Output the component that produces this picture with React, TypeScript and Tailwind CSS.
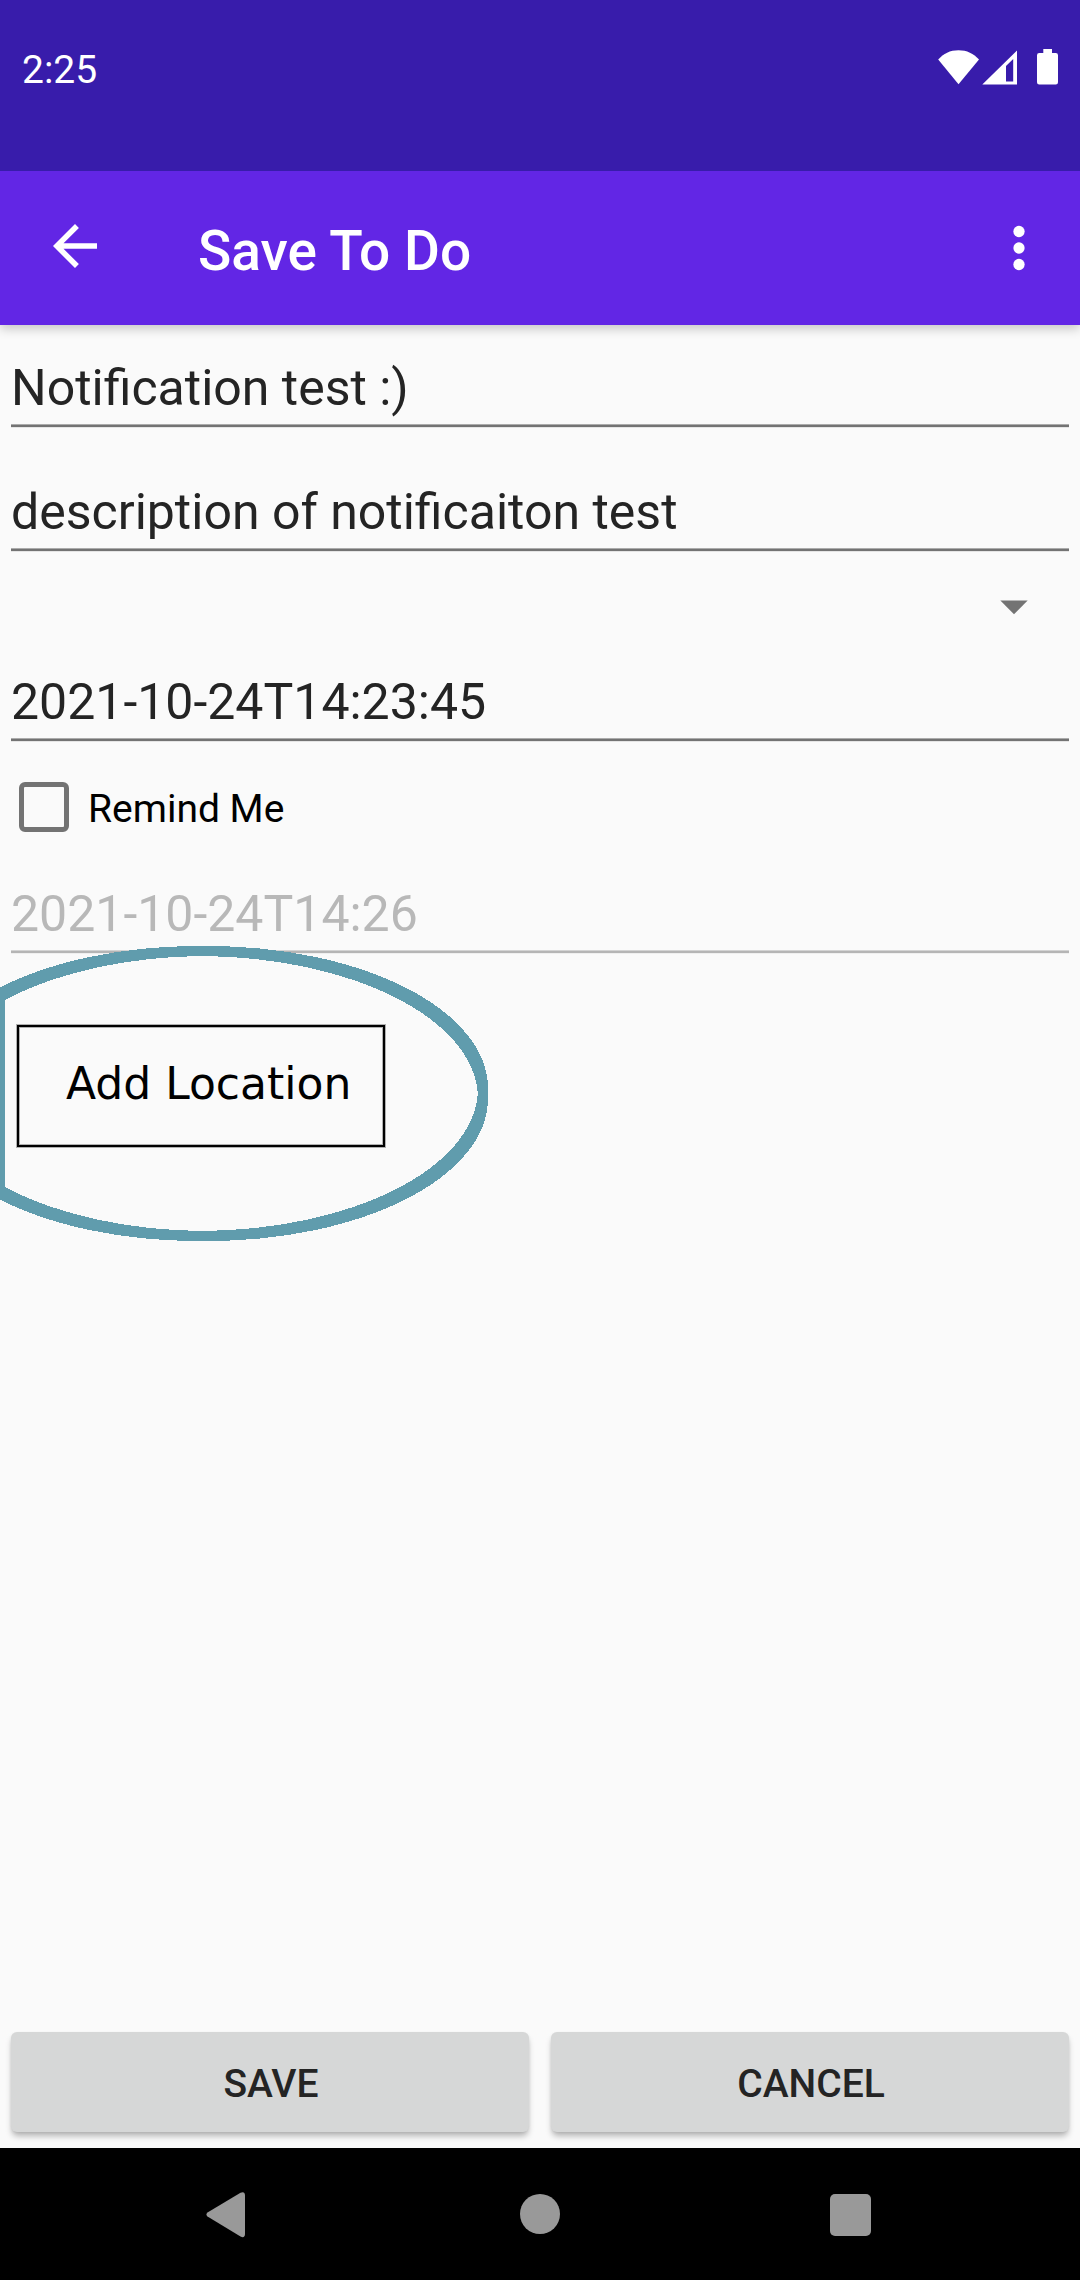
import React from "react";

function Underline({ muted = false }: { muted?: boolean }) {
  return (
    <div
      className={
        muted
          ? "h-1 border-y border-t-[#d3d3d3] border-b-[#efefef] bg-[#b5b5b5]"
          : "h-1 border-y border-t-[#ababab] border-b-[#e5e5e5] bg-[#737373]"
      }
    />
  );
}

function Field({ value, className, muted = false }: { value: string; className: string; muted?: boolean }) {
  return (
    <div className={`flex flex-col justify-between ${className}`}>
      <div className={`whitespace-nowrap text-[50px] leading-[58px] ${muted ? "text-[#b8b8b8]" : "text-[#242424]"}`}>
        {value}
      </div>
      <Underline muted={muted} />
    </div>
  );
}

function StatusBar() {
  return (
    <div className="relative z-20 flex h-[171px] items-start justify-between bg-[#381cab] pl-[22px] text-white">
      <span className="mt-[47px] text-[39px] leading-[46px]">2:25</span>
      <svg className="mt-[48px] mr-[20px]" width="124" height="40" viewBox="936 48 124 40" fill="#fff">
        <path d="M938.2 59.5C943.500 53.500 950 50.200 958.500 50.200S973.500 53.500 979 59.500L958.500 84.300Z" />
        <path fillRule="evenodd" d="M982.300 84.500L1017 50.500V84.500ZM1006 66V81.500H1013.200V59Z" />
        <path d="M1043.300 49H1052V53H1055.800a2.200 2.200 0 0 1 2.200 2.200V82.300a2.200 2.200 0 0 1-2.200 2.200H1039.200a2.200 2.200 0 0 1-2.200-2.200V55.200a2.200 2.200 0 0 1 2.200-2.200H1043.300Z" />
      </svg>
    </div>
  );
}

function Toolbar() {
  return (
    <div className="relative z-10 flex h-[154px] items-start bg-[#6226e5] text-white shadow-[0_4px_10px_rgba(0,0,0,0.2)]">
      <svg className="mt-[42px] ml-[42px] shrink-0" width="66" height="66" viewBox="0 0 24 24" fill="currentColor">
        <path d="M20 11H7.830l5.590-5.590L12 4l-8 8 8 8 1.410-1.410L7.830 13H20v-2z" />
      </svg>
      <h1 className="mt-[47px] ml-[90px] grow text-[55px] leading-[66px] font-medium">Save To Do</h1>
      <svg className="mt-[44px] mr-[28px] shrink-0" width="66" height="66" viewBox="0 0 24 24" fill="currentColor">
        <circle cx="12" cy="6" r="2.050" />
        <circle cx="12" cy="12" r="2.050" />
        <circle cx="12" cy="18" r="2.050" />
      </svg>
    </div>
  );
}

function ActionButton({ label }: { label: string }) {
  return (
    <button className="h-[100px] flex-1 rounded-[6px] bg-[#d6d7d7] pt-[3px] pl-[2px] text-[39px] leading-[46px] font-medium text-[#242424] shadow-[0_5px_6px_-1px_rgba(0,0,0,0.28),0_1px_3px_rgba(0,0,0,0.06)]">
      {label}
    </button>
  );
}

export default function App() {
  return (
    <div className="flex h-[2280px] w-[1080px] flex-col overflow-hidden bg-[#fafafa] font-['Roboto',sans-serif]">
      <StatusBar />
      <Toolbar />
      <main className="flex grow flex-col px-[11px]">
        <Field value="Notification test :)" className="mt-[34px] h-[69px]" />
        <Field value="description of notificaiton test" className="mt-[55px] h-[69px]" />
        <div className="flex h-[121px] items-start justify-end pt-[48px] pr-[41px]">
          <svg width="28" height="15" viewBox="0 0 28 15" fill="#737373">
            <path d="M0.300 0.500H27.700L14 14.300Z" />
          </svg>
        </div>
        <Field value="2021-10-24T14:23:45" className="h-[69px]" />
        <label className="mt-[40px] flex h-[50px] items-center pl-[8px]">
          <span className="size-[50px] rounded-[6px] border-[5.500px] border-[#737373]" />
          <span className="mt-[4px] ml-[19px] text-[39px] leading-[46px] text-black">Remind Me</span>
        </label>
        <Field value="2021-10-24T14:26" muted className="mt-[53px] h-[69px]" />
        <div className="relative mt-[70px] ml-[5px] h-[124px] w-[370px]">
          <svg
            className="absolute -top-[84px] -left-[16px]"
            width="500"
            height="310"
            viewBox="0 940 500 310"
            fill="#609cad"
            shapeRendering="crispEdges"
          >
            <path
              fillRule="evenodd"
              d="M-83 1088.5A280.5 142.5 0 0 1 197.5 946H207.5A280.5 142.5 0 0 1 488 1088.5V1098.5A280.5 142.5 0 0 1 207.5 1241H197.5A280.5 142.5 0 0 1 -83 1098.5ZM202.5 956A280.5 142.5 0 0 1 477.8 1093.5A280.5 142.5 0 0 1 202.5 1231A280.5 142.5 0 0 1 -72.8 1093.5A280.5 142.5 0 0 1 202.5 956Z"
            />
            <path d="M0 990H5V1197H0Z" />
          </svg>
          <button className="relative flex h-full w-full items-center border border-[#b0b0b0] pb-[5px] pl-[49px] font-['DejaVu_Sans',sans-serif] text-[44px] leading-[52px] whitespace-nowrap text-black shadow-[inset_0_0_0_2px_#000,inset_0_0_0_3px_#b0b0b0]">
            Add Location
          </button>
        </div>
        <div className="mt-auto mb-[16px] flex gap-[22px]">
          <ActionButton label="SAVE" />
          <ActionButton label="CANCEL" />
        </div>
      </main>
      <nav className="flex h-[132px] shrink-0 items-start bg-black pt-[44px]">
        <svg className="ml-[206px]" width="40" height="46" viewBox="206 2192 40 46" fill="#999">
          <path d="M207.500 2212.500L240.500 2192.800Q244.800 2190.900 245 2195.500V2234Q244.800 2238.600 240.500 2236.500L207.500 2216.600Q205.400 2214.500 207.500 2212.500Z" />
        </svg>
        <span className="mt-[2px] ml-[274px] size-[40px] rounded-full bg-[#999]" />
        <span className="mt-[2px] ml-[270px] h-[41.500px] w-[41px] rounded-[5px] bg-[#999]" />
      </nav>
    </div>
  );
}
